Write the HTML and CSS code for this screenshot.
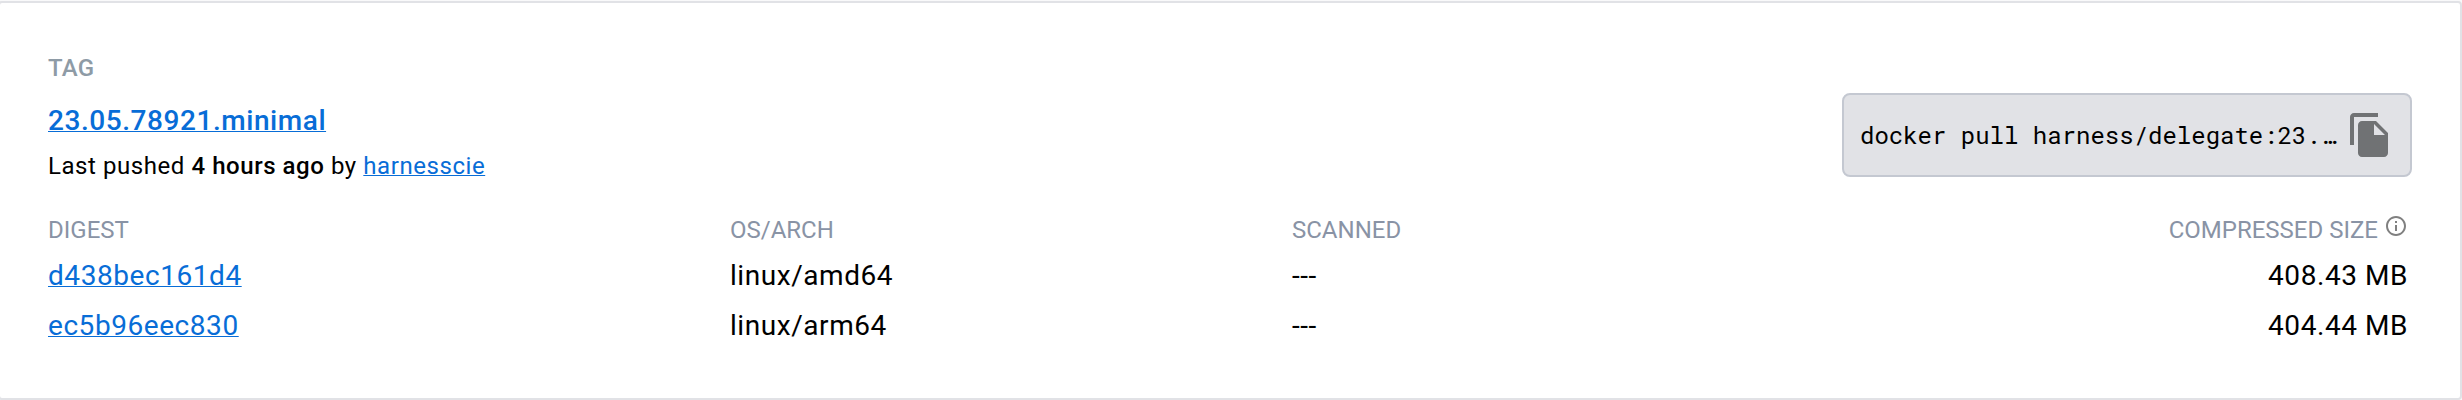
FILE: index.html
```html
<!DOCTYPE html>
<html lang="en">
<head>
<meta charset="utf-8">
<title>Tag 23.05.78921.minimal</title>
<link rel="stylesheet" href="styles.css">
</head>
<body>
<section class="card">
  <header class="card-head">
    <div class="summary">
      <div class="tag-label">TAG</div>
      <div class="tag-name"><a href="#">23.05.78921.minimal</a></div>
      <div class="pushed">Last pushed <strong>4 hours ago</strong> by <a href="#">harnesscie</a></div>
    </div>
    <div class="command">
      <code class="command-text">docker pull harness/delegate:23.…</code>
      <svg class="copy-icon" viewBox="0 0 24 24"><path d="M16 1H4c-1.1 0-2 .9-2 2v14h2V3h12V1zm-1 4l6 6v10c0 1.1-.9 2-2 2H7.99C6.89 23 6 22.1 6 21l.01-14c0-1.1.89-2 1.99-2h7zm-1 7h5.5L14 6.5V12z"/></svg>
    </div>
  </header>
  <div class="images">
    <div class="column-label">DIGEST</div>
    <div class="column-label">OS/ARCH</div>
    <div class="column-label">SCANNED</div>
    <div class="column-label size-label">COMPRESSED SIZE
      <svg class="info-icon" viewBox="0 0 24 24"><path d="M11 7h2v2h-2zm0 4h2v6h-2zm1-9C6.480 2 2 6.480 2 12s4.480 10 10 10 10-4.480 10-10S17.520 2 12 2zm0 18c-4.410 0-8-3.590-8-8s3.590-8 8-8 8 3.590 8 8-3.590 8-8 8z"/></svg>
    </div>
    <div class="cell"><a href="#">d438bec161d4</a></div>
    <div class="cell">linux/amd64</div>
    <div class="cell">---</div>
    <div class="cell size">408.43 MB</div>
    <div class="cell"><a href="#">ec5b96eec830</a></div>
    <div class="cell">linux/arm64</div>
    <div class="cell">---</div>
    <div class="cell size">404.44 MB</div>
  </div>
</section>
</body>
</html>
```
FILE: styles.css
```css
* { box-sizing: border-box; }
body {
  margin: 0;
  padding-top: 1px;
  background: #f9f9fa;
  color: #000;
  font-family: Roboto, sans-serif;
  overflow: hidden;
}
a {
  color: #086dd7;
  text-decoration: underline;
  text-decoration-thickness: 1px;
  text-underline-offset: 1px;
  text-decoration-skip-ink: none;
}
.card {
  height: 399px;
  margin-left: -2px;
  padding: 47px 48px 0;
  background: #fff;
  border: 2px solid #e1e2e6;
  border-radius: 4px;
}
.card-head {
  display: flex;
  justify-content: space-between;
  align-items: flex-start;
}
.tag-label {
  height: 36px;
  margin-bottom: 14px;
  color: #8e9ba6;
  font-size: 24px;
  font-weight: 500;
  line-height: 36px;
  letter-spacing: 0.3px;
}
.tag-name {
  margin-bottom: 6px;
  font-size: 28px;
  font-weight: 500;
  line-height: 42px;
  letter-spacing: 0.56px;
}
.pushed {
  font-size: 24px;
  line-height: 36px;
  letter-spacing: 0.56px;
}
.pushed strong { font-weight: 500; }
.command {
  display: flex;
  align-items: center;
  justify-content: space-between;
  width: 570px;
  height: 84px;
  margin-top: 43px;
  padding: 0 16px;
  background: #e1e2e6;
  border: 2px solid #c4c8d1;
  border-radius: 8px;
}
.command-text {
  font-family: "Roboto Mono", "DejaVu Sans Mono", monospace;
  font-size: 24px;
  line-height: 36px;
  white-space: nowrap;
}
.copy-icon { width: 48px; height: 48px; fill: #707274; }
.images {
  display: grid;
  grid-template-columns: 682px 562px 1fr auto;
  grid-template-rows: 39px 50px 50px;
  padding-right: 4px;
  margin-top: 28px;
}
.column-label {
  color: #8993a5;
  font-size: 24px;
  line-height: 36px;
}
.size-label { display: flex; justify-content: flex-end; gap: 6px; }
.info-icon { width: 24px; height: 24px; margin-top: 2px; fill: #808080; }
.cell {
  font-size: 28px;
  line-height: 50px;
  letter-spacing: 0.56px;
}
.size { text-align: right; }
```
